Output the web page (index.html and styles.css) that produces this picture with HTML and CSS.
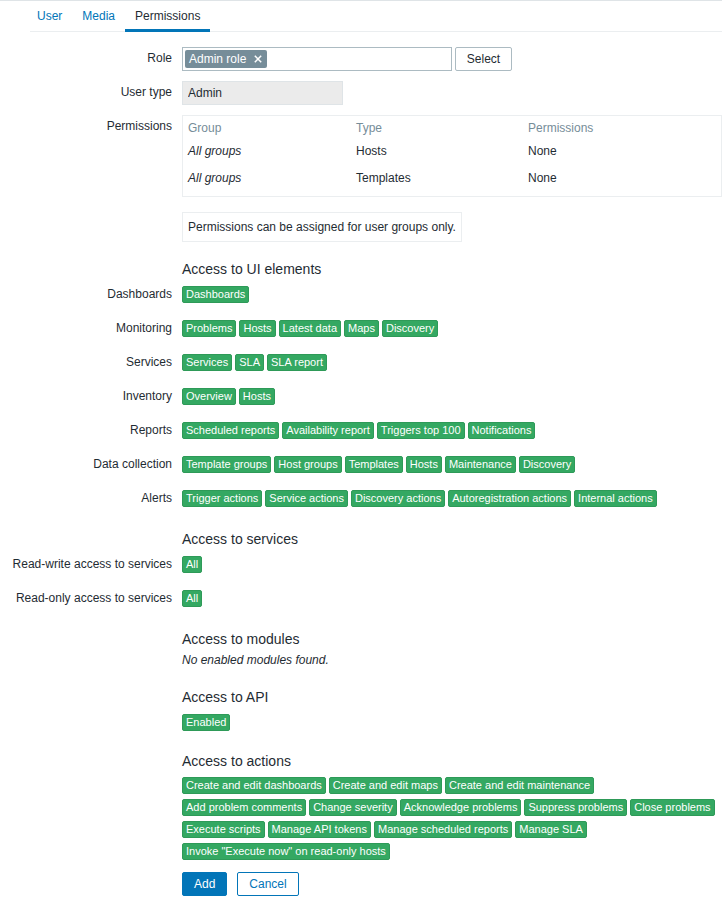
FILE: index.html
```html
<!DOCTYPE html>
<html>
<head>
<meta charset="utf-8">
<link rel="stylesheet" href="styles.css">
</head>
<body>
<div class="tabs">
  <ul class="tab-list">
    <li class="tab"><a>User</a></li>
    <li class="tab"><a>Media</a></li>
    <li class="tab active"><a>Permissions</a></li>
  </ul>
</div>
<form class="form">
  <div class="grid">
    <label class="lbl">Role</label>
    <div class="field role-field">
      <div class="multiselect">
        <span class="ms-tag">Admin role<svg class="ms-x" width="8" height="8" viewBox="0 0 8 8"><path d="M0.8 0.8 L7.2 7.2 M7.2 0.8 L0.8 7.2" stroke="#fff" stroke-width="1.5" fill="none"/></svg></span>
      </div>
      <button type="button" class="btn-alt">Select</button>
    </div>

    <label class="lbl">User type</label>
    <div class="field"><input class="readonly" type="text" value="Admin" readonly></div>

    <label class="lbl">Permissions</label>
    <div class="field">
      <div class="perm-table">
        <div class="pt-row pt-head"><span>Group</span><span>Type</span><span>Permissions</span></div>
        <div class="pt-row pt-r1"><span class="it">All groups</span><span>Hosts</span><span>None</span></div>
        <div class="pt-row pt-r2"><span class="it">All groups</span><span>Templates</span><span>None</span></div>
      </div>
    </div>

    <div class="field col2"><div class="info">Permissions can be assigned for user groups only.</div></div>
  </div>

  <h4 class="sec h-ui">Access to UI elements</h4>
  <div class="grid">
    <label class="lbl">Dashboards</label>
    <div class="field tags"><span class="tag">Dashboards</span></div>
    <label class="lbl">Monitoring</label>
    <div class="field tags"><span class="tag">Problems</span><span class="tag">Hosts</span><span class="tag">Latest data</span><span class="tag">Maps</span><span class="tag">Discovery</span></div>
    <label class="lbl">Services</label>
    <div class="field tags"><span class="tag">Services</span><span class="tag">SLA</span><span class="tag">SLA report</span></div>
    <label class="lbl">Inventory</label>
    <div class="field tags"><span class="tag">Overview</span><span class="tag">Hosts</span></div>
    <label class="lbl">Reports</label>
    <div class="field tags"><span class="tag">Scheduled reports</span><span class="tag">Availability report</span><span class="tag">Triggers top 100</span><span class="tag">Notifications</span></div>
    <label class="lbl">Data collection</label>
    <div class="field tags"><span class="tag">Template groups</span><span class="tag">Host groups</span><span class="tag">Templates</span><span class="tag">Hosts</span><span class="tag">Maintenance</span><span class="tag">Discovery</span></div>
    <label class="lbl">Alerts</label>
    <div class="field tags"><span class="tag">Trigger actions</span><span class="tag">Service actions</span><span class="tag">Discovery actions</span><span class="tag">Autoregistration actions</span><span class="tag">Internal actions</span></div>
  </div>

  <h4 class="sec h-services">Access to services</h4>
  <div class="grid">
    <label class="lbl">Read-write access to services</label>
    <div class="field tags"><span class="tag">All</span></div>
    <label class="lbl">Read-only access to services</label>
    <div class="field tags"><span class="tag">All</span></div>
  </div>

  <h4 class="sec h-modules">Access to modules</h4>
  <div class="single modules-msg"><em>No enabled modules found.</em></div>

  <h4 class="sec h-api">Access to API</h4>
  <div class="single tags"><span class="tag">Enabled</span></div>

  <h4 class="sec h-actions">Access to actions</h4>
  <div class="single tags wrap">
    <span class="tag">Create and edit dashboards</span><span class="tag">Create and edit maps</span><span class="tag">Create and edit maintenance</span><span class="tag">Add problem comments</span><span class="tag">Change severity</span><span class="tag">Acknowledge problems</span><span class="tag">Suppress problems</span><span class="tag">Close problems</span><span class="tag">Execute scripts</span><span class="tag">Manage API tokens</span><span class="tag">Manage scheduled reports</span><span class="tag">Manage SLA</span><span class="tag">Invoke "Execute now" on read-only hosts</span>
  </div>

  <div class="single buttons">
    <button type="button" class="btn-main">Add</button>
    <button type="button" class="btn-cancel">Cancel</button>
  </div>
</form>
</body>
</html>
```
FILE: styles.css
```css
* { box-sizing: border-box; }
html, body { margin: 0; padding: 0; background: #fff; }
body {
  font-family: "Liberation Sans", Arial, sans-serif;
  font-size: 12px;
  line-height: 14px;
  color: #1f2c33;
  width: 722px;
}

.tabs { border-top: 1px solid #dfe4e7; }
.tab-list {
  list-style: none;
  margin: 0 0 0 30px;
  padding: 0;
  display: flex;
  border-bottom: 1px solid #ebeef0;
  height: 31px;
}
.tab { position: relative; }
.tab:first-child { margin-left: -3px; }
.tab a {
  display: block;
  padding: 8px 10px;
  line-height: 14px;
  color: #0275b8;
}
.tab.active a { color: #1f2c33; }
.tab.active::after {
  content: "";
  position: absolute;
  left: 0; right: 0; bottom: -1px;
  height: 3px;
  background: #0275b8;
}

.form { padding-top: 15px; }

.grid {
  display: grid;
  grid-template-columns: 172px 540px;
  column-gap: 10px;
  row-gap: 10px;
}
.lbl {
  text-align: right;
  padding-top: 4px;
  line-height: 14px;
  white-space: nowrap;
}
.field { min-height: 24px; }
.col2 { grid-column: 2; }

.role-field { display: flex; align-items: flex-start; }
.multiselect {
  width: 270px;
  height: 24px;
  border: 1px solid #acbbc2;
  padding: 2px;
  background: #fff;
}
.ms-tag {
  display: inline-flex;
  align-items: center;
  height: 18px;
  padding: 0 5px 0 4px;
  background: #768d99;
  color: #fff;
  border-radius: 2px;
  line-height: 18px;
}
.ms-x { margin-left: 8px; }

.btn-alt {
  margin-left: 3px;
  height: 24px;
  width: 57px;
  padding: 0;
  font: inherit;
  color: #1f2c33;
  background: #fff;
  border: 1px solid #acbbc2;
  border-radius: 2px;
}

.readonly {
  width: 161px;
  height: 24px;
  font: inherit;
  color: #1f2c33;
  background: #ebebeb;
  border: 1px solid #dfe4e7;
  padding: 0 5px;
  margin: 0;
  outline: none;
}

.perm-table {
  border: 1px solid #ebeef0;
  width: 540px;
  height: 82px;
  padding: 0 5px;
}
.pt-row {
  display: grid;
  grid-template-columns: 168px 172px 1fr;
  line-height: 14px;
}
.pt-head { color: #768d99; padding: 5px 0 3px; }
.pt-r1 { padding: 6px 0 7px; }
.pt-r2 { padding: 6px 0 6px; }
.it { font-style: italic; }

.info {
  display: inline-block;
  margin-top: 5px;
  border: 1px solid #ebeef0;
  padding: 7px 5px 7px 5px;
  line-height: 14px;
}

.sec {
  margin: 0 0 5px 182px;
  font-size: 14px;
  font-weight: normal;
  line-height: 18px;
}
.h-ui { margin-top: 18px; }
.h-services { margin-top: 19px; }
.h-modules { margin-top: 19px; }
.h-api { margin-top: 11px; }
.h-actions { margin-top: 21px; }

.single { margin-left: 182px; width: 540px; }
.modules-msg { height: 24px; line-height: 14px; }

.tags {
  display: flex;
  align-items: flex-start;
  padding-top: 3px;
}
.tags.wrap {
  flex-wrap: wrap;
  padding-top: 2px;
}
.tag {
  display: inline-block;
  font-size: 11px;
  line-height: 13px;
  padding: 1px 3px;
  color: #fff;
  background: #34a862;
  border: 1px solid #2e9a58;
  border-radius: 2px;
  margin-right: 3px;
  white-space: nowrap;
}
.tags.wrap .tag { margin-bottom: 5px; }

.buttons { display: flex; margin-top: 7px; }
.btn-main, .btn-cancel {
  height: 24px;
  padding: 0 11px;
  font: inherit;
  border-radius: 2px;
  line-height: 22px;
}
.btn-main {
  background: #0275b8;
  border: 1px solid #0275b8;
  color: #fff;
  margin-right: 10px;
}
.btn-cancel {
  background: #fff;
  border: 1px solid #0275b8;
  color: #0275b8;
}
```
